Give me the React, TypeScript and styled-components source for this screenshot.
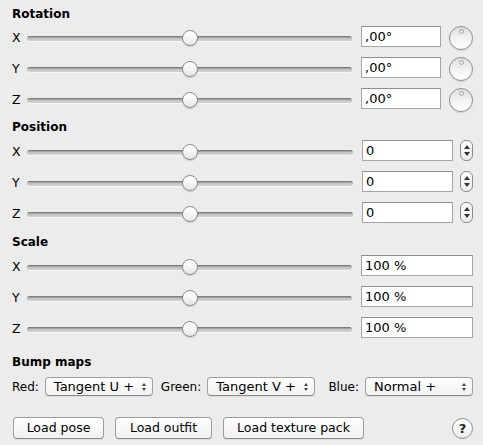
import React from "react";
import styled, { createGlobalStyle } from "styled-components";

const Global = createGlobalStyle`
  html, body { margin: 0; padding: 0; background: #ececec; }
  body { font-family: "Lucida Grande", "DejaVu Sans", sans-serif; font-size: 12px; color: #000; }
`;

const Panel = styled.div`
  width: 483px;
  height: 445px;
  box-sizing: border-box;
  padding: 6px 10px 0 12px;
  display: flex;
  flex-direction: column;
`;

const Section = styled.section<{ $top: number }>`
  display: flex;
  flex-direction: column;
  margin-top: ${(p) => p.$top}px;
`;

const Heading = styled.div<{ $after: number }>`
  font-weight: bold;
  font-size: 12px;
  line-height: 16px;
  height: 16px;
  margin-bottom: ${(p) => p.$after}px;
`;

const Rows = styled.div`
  display: flex;
  flex-direction: column;
  gap: 10px;
`;

const Row = styled.div`
  display: flex;
  align-items: center;
  height: 21px;
`;

const AxisLabel = styled.span`
  width: 15px;
  flex: none;
  font-size: 12.5px;
  line-height: 16px;
  padding-top: 2px;
`;

const Slider = styled.div`
  position: relative;
  flex: 1;
  height: 21px;
  margin-right: 9px;
  display: flex;
  align-items: center;
`;

const Track = styled.div`
  width: 100%;
  height: 5px;
  margin-top: 3px;
  box-sizing: border-box;
  border-radius: 3px;
  background: linear-gradient(#6f6f6f 0, #8a8a8a 1px, #bdbdbd 2px, #cfcfcf 4px);
  box-shadow: 0 1px 0 rgba(255, 255, 255, 0.6);
`;

const Thumb = styled.div`
  position: absolute;
  left: 50%;
  top: 50%;
  width: 16px;
  height: 16px;
  margin-left: -8px;
  margin-top: -7px;
  box-sizing: border-box;
  border-radius: 50%;
  border: 1px solid #8c8c8c;
  background: linear-gradient(#ffffff 0%, #f6f6f6 50%, #e4e4e4 100%);
  box-shadow: 0 1px 1px rgba(0, 0, 0, 0.15);
`;

const Field = styled.div<{ $w: number }>`
  width: ${(p) => p.$w}px;
  height: 21px;
  flex: none;
  box-sizing: border-box;
  background: #fff;
  border: 1px solid #a5a5a5;
  border-top-color: #8e8e8e;
  padding: 0 3px;
  line-height: 19px;
  font-size: 13px;
  font-family: "DejaVu Sans", sans-serif;
`;

const Dial = styled.div`
  position: relative;
  width: 24px;
  height: 24px;
  margin-left: 8px;
  margin-top: 3px;
  flex: none;
  box-sizing: border-box;
  border-radius: 50%;
  border: 1px solid #8f8f8f;
  background: linear-gradient(#dedede 0%, #f4f4f4 55%, #ffffff 100%);
  box-shadow: 0 1px 1px rgba(0, 0, 0, 0.12);
`;

const DialDot = styled.div`
  position: absolute;
  left: 50%;
  top: 2px;
  width: 5px;
  height: 5px;
  margin-left: -2.5px;
  box-sizing: border-box;
  border-radius: 50%;
  border: 1px solid #a8a8a8;
  background: #e6e6e6;
`;

const Stepper = styled.div`
  width: 13px;
  height: 21px;
  margin-left: 7px;
  flex: none;
  box-sizing: border-box;
  border-radius: 6px;
  border: 1px solid #8a8a8a;
  background: linear-gradient(#ffffff, #ececec);
  display: flex;
  flex-direction: column;
  align-items: center;
  justify-content: space-between;
  padding: 4px 0 4px;
`;

const Arrow = styled.div<{ $down?: boolean }>`
  width: 0;
  height: 0;
  border-left: 3px solid transparent;
  border-right: 3px solid transparent;
  ${(p) =>
    p.$down
      ? "border-top: 4px solid #333;"
      : "border-bottom: 4px solid #333;"}
`;

const BumpRow = styled.div`
  display: flex;
  align-items: center;
  height: 19px;
  margin-top: 7px;
`;

const BumpGroup = styled.div<{ $push?: boolean; $gap: number }>`
  display: flex;
  align-items: center;
  margin-left: ${(p) => (p.$push ? "auto" : `${p.$gap}px`)};
`;

const BumpLabel = styled.span`
  margin-right: 6px;
`;

const Select = styled.div`
  width: 108px;
  height: 19px;
  box-sizing: border-box;
  border-radius: 4px;
  border: 1px solid #9f9f9f;
  border-bottom-color: #8a8a8a;
  background: linear-gradient(#ffffff, #f1f1f1);
  box-shadow: 0 1px 0 rgba(0, 0, 0, 0.06);
  display: flex;
  align-items: center;
  padding: 0 6px 0 8px;
  line-height: 17px;
  font-size: 13px;
`;

const SelectText = styled.span`
  flex: 1;
  white-space: nowrap;
`;

const SelectArrows = styled.span`
  display: flex;
  flex-direction: column;
  gap: 2px;
`;

const SmallArrow = styled.div<{ $down?: boolean }>`
  width: 0;
  height: 0;
  border-left: 2.5px solid transparent;
  border-right: 2.5px solid transparent;
  ${(p) =>
    p.$down
      ? "border-top: 3px solid #444;"
      : "border-bottom: 3px solid #444;"}
`;

const ButtonRow = styled.div`
  display: flex;
  align-items: center;
  margin-top: 21px;
  padding-left: 1px;
  gap: 11px;
`;

const Button = styled.button<{ $w: number }>`
  width: ${(p) => p.$w}px;
  height: 22px;
  box-sizing: border-box;
  border-radius: 4px;
  border: 1px solid #9d9d9d;
  border-bottom-color: #888;
  background: linear-gradient(#ffffff, #f0f0f0);
  box-shadow: 0 1px 0 rgba(0, 0, 0, 0.06);
  font-family: "Lucida Grande", "DejaVu Sans", sans-serif;
  font-size: 12.5px;
  color: #000;
  padding: 0;
  line-height: 20px;
`;

const Help = styled.div`
  margin-left: auto;
  width: 21px;
  height: 21px;
  box-sizing: border-box;
  border-radius: 50%;
  border: 1px solid #8d8d8d;
  background: linear-gradient(#ffffff, #ececec);
  display: flex;
  align-items: center;
  justify-content: center;
  font-weight: bold;
  font-size: 13px;
  color: #222;
`;

type Kind = "rotation" | "position" | "scale";

const AxisRow: React.FC<{ axis: string; kind: Kind }> = ({ axis, kind }) => (
  <Row>
    <AxisLabel>{axis}</AxisLabel>
    <Slider>
      <Track />
      <Thumb />
    </Slider>
    {kind === "rotation" && (
      <>
        <Field $w={80}>,00°</Field>
        <Dial>
          <DialDot />
        </Dial>
      </>
    )}
    {kind === "position" && (
      <>
        <Field $w={91}>0</Field>
        <Stepper>
          <Arrow />
          <Arrow $down />
        </Stepper>
      </>
    )}
    {kind === "scale" && <Field $w={112}>100 %</Field>}
  </Row>
);

const Group: React.FC<{ title: string; kind: Kind; top: number; after: number }> = ({
  title,
  kind,
  top,
  after,
}) => (
  <Section $top={top}>
    <Heading $after={after}>{title}</Heading>
    <Rows>
      {["X", "Y", "Z"].map((a) => (
        <AxisRow key={a} axis={a} kind={kind} />
      ))}
    </Rows>
  </Section>
);

const SelectBox: React.FC<{ value: string }> = ({ value }) => (
  <Select>
    <SelectText>{value}</SelectText>
    <SelectArrows>
      <SmallArrow />
      <SmallArrow $down />
    </SelectArrows>
  </Select>
);

export default function App() {
  return (
    <>
      <Global />
      <Panel>
        <Group title="Rotation" kind="rotation" top={0} after={4} />
        <Group title="Position" kind="position" top={10} after={5} />
        <Group title="Scale" kind="scale" top={11} after={5} />
        <Section $top={16}>
          <Heading $after={0}>Bump maps</Heading>
          <BumpRow>
            <BumpGroup $gap={0}>
              <BumpLabel>Red:</BumpLabel>
              <SelectBox value="Tangent U +" />
            </BumpGroup>
            <BumpGroup $gap={8}>
              <BumpLabel>Green:</BumpLabel>
              <SelectBox value="Tangent V +" />
            </BumpGroup>
            <BumpGroup $push $gap={0}>
              <BumpLabel>Blue:</BumpLabel>
              <SelectBox value="Normal +" />
            </BumpGroup>
          </BumpRow>
        </Section>
        <ButtonRow>
          <Button $w={91}>Load pose</Button>
          <Button $w={97}>Load outfit</Button>
          <Button $w={141}>Load texture pack</Button>
          <Help>?</Help>
        </ButtonRow>
      </Panel>
    </>
  );
}
